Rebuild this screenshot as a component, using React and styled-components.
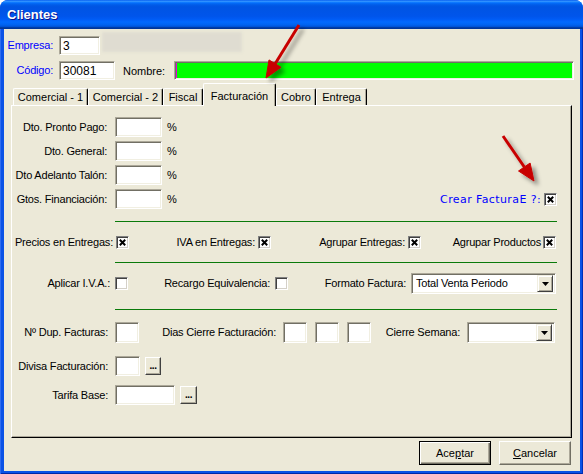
import React from "react";
import styled, { createGlobalStyle } from "styled-components";

const GlobalStyle = createGlobalStyle`
  html, body {
    margin: 0;
    padding: 0;
    background: #fff;
  }
  body {
    font-family: "Liberation Sans", Arial, sans-serif;
    font-size: 11px;
    color: #000;
  }
`;

const Window = styled.div`
  position: relative;
  width: 583px;
  height: 474px;
  display: flex;
  flex-direction: column;
  border-radius: 8px 8px 0 0;
  overflow: hidden;
  background: #0a4fe2;
`;

const TitleBar = styled.div`
  flex: none;
  height: 29px;
  display: flex;
  align-items: center;
  padding-left: 7px;
  color: #fff;
  font: bold 13px "Liberation Sans", Arial, sans-serif;
  text-shadow: 1px 1px #0f1089;
  background: linear-gradient(
    #0058ee 0%,
    #3593ff 4%,
    #288eff 6%,
    #127dff 8%,
    #036ffc 10%,
    #0262ee 14%,
    #0057e5 20%,
    #0054e3 24%,
    #0055eb 56%,
    #005bf5 66%,
    #026afe 76%,
    #0062ef 86%,
    #0052d6 92%,
    #0040ab 94%,
    #003092 100%
  );
`;

const Frame = styled.div`
  flex: 1;
  display: flex;
  min-height: 0;
  padding: 0 3px 3px 4px;
  background: #0b52e6;
  box-shadow: inset 1px 0 #2f6cf0, inset -1px 0 #0030b8, inset 0 -1px #0028a8;
`;

const Body = styled.div`
  flex: 1;
  display: flex;
  flex-direction: column;
  min-height: 0;
  padding: 3px 0 6px;
  background: #ece9d8;
`;

const TopRow = styled.div`
  display: flex;
  align-items: ${(p) => p.$align || "center"};
  height: ${(p) => p.$h}px;
  margin-top: ${(p) => p.$mt || 0}px;
`;

const Caption = styled.span`
  box-sizing: border-box;
  flex: none;
  ${(p) => p.$w && `width: ${p.$w}px;`}
  padding-right: ${(p) => p.$pad ?? 6}px;
  text-align: right;
  white-space: nowrap;
  line-height: 19px;
  letter-spacing: -0.2px;
  color: ${(p) => (p.$blue ? "#0000ff" : "#000")};
`;

const InlineLabel = styled.span`
  margin: 0 9px 0 8px;
  white-space: nowrap;
`;

const TextBox = styled.div`
  box-sizing: border-box;
  flex: none;
  width: ${(p) => p.$w}px;
  height: ${(p) => p.$h || 20}px;
  padding: 0 3px;
  display: flex;
  align-items: center;
  background: #fff;
  border: 1px solid;
  border-color: #aca899 #fff #fff #aca899;
  box-shadow: inset 1px 1px #716f64, inset -1px -1px #f1efe2;
  font-size: 12px;
  line-height: 1;
`;

const NameField = styled(TextBox)`
  background: linear-gradient(to right, #00ff00 0 1px, #e000e0 1px 2px, #00ff00 2px);
`;

const Smudge = styled.div`
  align-self: flex-start;
  width: 140px;
  height: 20px;
  margin-left: 2px;
  background: #dfdcd1;
  filter: blur(1.5px);
`;

const TabStrip = styled.div`
  display: flex;
  align-items: flex-end;
  height: 22px;
  margin: 3px 0 0 7px;
  padding-left: 2px;
`;

const Tab = styled.div`
  box-sizing: border-box;
  position: relative;
  z-index: ${(p) => (p.$active ? 1 : 0)};
  width: ${(p) => p.$w}px;
  height: ${(p) => (p.$active ? 23 : 17)}px;
  margin-bottom: ${(p) => (p.$active ? -1 : 0)}px;
  padding-top: ${(p) => (p.$active ? 2 : 0)}px;
  display: flex;
  align-items: center;
  justify-content: center;
  background: #ece9d8;
  border-top: 1px solid #fff;
  border-left: 1px solid #fff;
  border-right: 1px solid #000;
  border-radius: 2px 2px 0 0;
  box-shadow: inset -1px 0 #aca899;
  white-space: nowrap;
`;

const Panel = styled.div`
  box-sizing: border-box;
  flex: 1;
  min-height: 0;
  margin: 0 8px 0 7px;
  padding: 11px 14px 0 0;
  display: flex;
  flex-direction: column;
  background: #ece9d8;
  border-top: 1px solid #fff;
  border-left: 1px solid #fff;
  border-right: 1px solid #000;
  border-bottom: 1px solid #000;
  box-shadow: inset -1px -1px #aca899;
`;

const Stack = styled.div`
  display: flex;
  flex-direction: column;
  gap: 4px;
`;

const FormRow = styled.div`
  display: grid;
  grid-template-columns: ${(p) => p.$cols};
  align-items: center;
  height: ${(p) => p.$h || 20}px;
  margin-top: ${(p) => p.$mt || 0}px;
`;

const Percent = styled.span`
  padding-left: 5px;
`;

const BlueNote = styled.span`
  justify-self: end;
  padding-right: 3px;
  color: #0000ff;
  font: 11px "DejaVu Sans", Verdana, sans-serif;
  letter-spacing: 0.4px;
  white-space: nowrap;
`;

const Rule = styled.div`
  height: 1px;
  margin: ${(p) => p.$mt}px 0 0 103px;
  background: #0a7a0a;
`;

const CheckBox = styled.span`
  box-sizing: border-box;
  width: 13px;
  height: 13px;
  display: inline-flex;
  align-items: center;
  justify-content: center;
  background: #fff;
  border: 1px solid;
  border-color: #808080 #fff #fff #808080;
  box-shadow: inset 1px 1px #404040, inset -1px -1px #d4d0c8;
`;

const Combo = styled(TextBox)`
  width: auto;
  height: 21px;
  padding: 0 2px 0 4px;
  font-size: 11px;
`;

const ComboText = styled.span`
  flex: 1;
  white-space: nowrap;
  letter-spacing: -0.2px;
`;

const ComboButton = styled.span`
  box-sizing: border-box;
  width: 16px;
  height: 17px;
  display: flex;
  align-items: center;
  justify-content: center;
  background: #ece9d8;
  border: 1px solid;
  border-color: #f1efe2 #404040 #404040 #f1efe2;
  box-shadow: inset 1px 1px #fff, inset -1px -1px #aca899;
`;

const InputGroup = styled.div`
  display: flex;
  gap: 8px;
`;

const LookupRow = styled.div`
  display: flex;
  align-items: center;
  gap: 5px;
`;

const MiniButton = styled.span`
  box-sizing: border-box;
  width: ${(p) => p.$w}px;
  height: 18px;
  display: flex;
  align-items: flex-end;
  justify-content: center;
  padding-bottom: 3px;
  background: #ece9d8;
  border: 1px solid;
  border-color: #fff #404040 #404040 #fff;
  box-shadow: inset -1px -1px #aca899;
  font-weight: bold;
  font-size: 10px;
  line-height: 1;
  letter-spacing: -0.5px;
`;

const ButtonRow = styled.div`
  display: flex;
  justify-content: flex-end;
  gap: 8px;
  height: 24px;
  margin-top: 3px;
  padding-right: 9px;
`;

const DialogButton = styled.div`
  box-sizing: border-box;
  width: 72px;
  height: 24px;
  display: flex;
  align-items: center;
  justify-content: center;
  background: #ece9d8;
  border: 1px solid;
  border-color: ${(p) => (p.$default ? "#000" : "#fff #716f64 #716f64 #fff")};
  box-shadow: ${(p) =>
    p.$default
      ? "inset 1px 1px #fff, inset -1px -1px #716f64, inset -2px -2px #aca899"
      : "inset -1px -1px #aca899"};
  font-size: 11px;
`;

const Overlay = styled.svg`
  position: absolute;
  top: 0;
  left: 0;
  z-index: 5;
  pointer-events: none;
`;

const Cross = () => (
  <svg width="7" height="7" viewBox="0 0 7 7">
    <path d="M0.8 0.8 L6.2 6.2 M6.2 0.8 L0.8 6.2" stroke="#000" strokeWidth="2" />
  </svg>
);

const Check = ({ checked }) => <CheckBox>{checked && <Cross />}</CheckBox>;

const DownArrow = () => (
  <svg width="7" height="4" viewBox="0 0 7 4">
    <polygon points="0,0 7,0 3.5,4" fill="#000" />
  </svg>
);

const Select = ({ value }) => (
  <Combo>
    <ComboText>{value}</ComboText>
    <ComboButton>
      <DownArrow />
    </ComboButton>
  </Combo>
);

const tabs = [
  { label: "Comercial - 1", w: 75 },
  { label: "Comercial - 2", w: 75 },
  { label: "Fiscal", w: 40 },
  { label: "Facturación", w: 73, active: true },
  { label: "Cobro", w: 40 },
  { label: "Entrega", w: 51 },
];

const discounts = ["Dto. Pronto Pago:", "Dto. General:", "Dto Adelanto Talón:"];

// red pointer arrows drawn on top of the dialog
const Arrows = () => (
  <Overlay width="583" height="474" viewBox="0 0 583 474">
    <defs>
      <filter id="arrowShadow" x="-50%" y="-50%" width="200%" height="200%">
        <feDropShadow dx="4" dy="4" stdDeviation="2" floodColor="#000" floodOpacity="0.4" />
      </filter>
    </defs>
    <g filter="url(#arrowShadow)" fill="#c80000" stroke="#c80000">
      <line x1="299" y1="25" x2="275" y2="64" strokeWidth="3" />
      <polygon points="266,78 281,67.3 269,59.9" strokeWidth="1" strokeLinejoin="round" />
      <line x1="503" y1="136" x2="524.3" y2="167" strokeWidth="3" />
      <polygon points="534,181 530.1,163 518.5,171" strokeWidth="1" strokeLinejoin="round" />
    </g>
  </Overlay>
);

export default function App() {
  return (
    <>
      <GlobalStyle />
      <Window>
        <TitleBar>Clientes</TitleBar>
        <Frame>
          <Body>
            <TopRow $h={23} $align="flex-end">
              <Caption $w={55} $pad={6} $blue>
                Empresa:
              </Caption>
              <TextBox $w={41} $h={19}>3</TextBox>
              <Smudge />
            </TopRow>
            <TopRow $h={19} $mt={6}>
              <Caption $w={55} $pad={6} $blue>
                Código:
              </Caption>
              <TextBox $w={56} $h={19}>30081</TextBox>
              <InlineLabel>Nombre:</InlineLabel>
              <NameField $w={400} $h={19} />
            </TopRow>

            <TabStrip>
              {tabs.map((t) => (
                <Tab key={t.label} $w={t.w} $active={t.active}>
                  {t.label}
                </Tab>
              ))}
            </TabStrip>

            <Panel>
              <Stack>
                {discounts.map((d) => (
                  <FormRow key={d} $cols="103px 47px 1fr">
                    <Caption $pad={8}>{d}</Caption>
                    <TextBox $w={47} />
                    <Percent>%</Percent>
                  </FormRow>
                ))}
                <FormRow $cols="103px 47px 20px 1fr 13px">
                  <Caption $pad={8}>Gtos. Financiación:</Caption>
                  <TextBox $w={47} />
                  <Percent>%</Percent>
                  <BlueNote>Crear FacturaE ?:</BlueNote>
                  <Check checked />
                </FormRow>
              </Stack>

              <Rule $mt={12} />
              <FormRow $mt={10} $cols="104px 13px 129px 13px 137px 13px 122px 13px">
                <Caption $pad={3}>Precios en Entregas:</Caption>
                <Check checked />
                <Caption $pad={3}>IVA en Entregas:</Caption>
                <Check checked />
                <Caption $pad={3}>Agrupar Entregas:</Caption>
                <Check checked />
                <Caption $pad={2}>Agrupar Productos</Caption>
                <Check checked />
              </FormRow>

              <Rule $mt={10} />
              <FormRow $mt={10} $h={21} $cols="103px 13px 147px 13px 123px 145px">
                <Caption $pad={5}>Aplicar I.V.A.:</Caption>
                <Check />
                <Caption $pad={5}>Recargo Equivalencia:</Caption>
                <Check />
                <Caption $pad={5}>Formato Factura:</Caption>
                <Select value="Total Venta Periodo" />
              </FormRow>

              <Rule $mt={15} />
              <FormRow $mt={12} $h={21} $cols="103px 24px 144px 88px 96px 88px">
                <Caption $pad={7}>Nº Dup. Facturas:</Caption>
                <TextBox $w={24} $h={21} />
                <Caption $pad={7}>Dias Cierre Facturación:</Caption>
                <InputGroup>
                  <TextBox $w={24} $h={21} />
                  <TextBox $w={24} $h={21} />
                  <TextBox $w={24} $h={21} />
                </InputGroup>
                <Caption $pad={7}>Cierre Semana:</Caption>
                <Select value="" />
              </FormRow>

              <FormRow $mt={13} $cols="103px 1fr">
                <Caption $pad={7}>Divisa Facturación:</Caption>
                <LookupRow>
                  <TextBox $w={25} />
                  <MiniButton $w={16}>...</MiniButton>
                </LookupRow>
              </FormRow>

              <FormRow $mt={9} $cols="103px 1fr">
                <Caption $pad={7}>Tarifa Base:</Caption>
                <LookupRow>
                  <TextBox $w={60} />
                  <MiniButton $w={17}>...</MiniButton>
                </LookupRow>
              </FormRow>
            </Panel>

            <ButtonRow>
              <DialogButton $default>
                Ace<u>p</u>tar
              </DialogButton>
              <DialogButton>
                <u>C</u>ancelar
              </DialogButton>
            </ButtonRow>
          </Body>
        </Frame>
        <Arrows />
      </Window>
    </>
  );
}
